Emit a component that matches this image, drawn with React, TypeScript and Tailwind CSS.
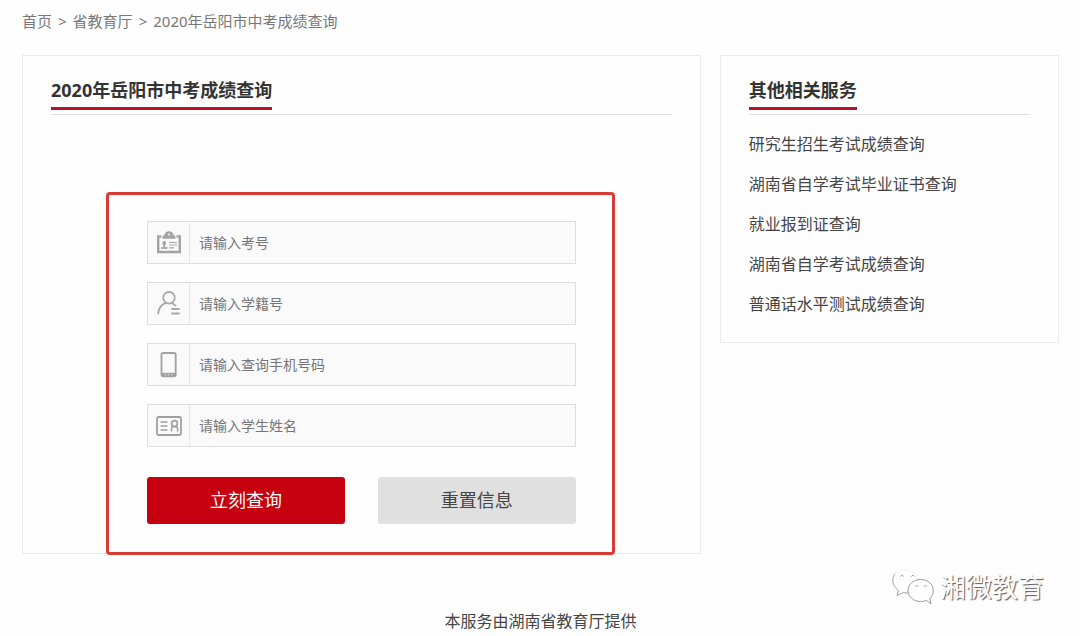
import React from 'react';

interface Field {
  id: string;
  placeholder: string;
  type: string;
  icon: React.ReactNode;
}

interface PanelTitleProps {
  children: React.ReactNode;
}

const BadgeIcon: React.FC = () => (
  <svg width="26" height="24" viewBox="0 0 26 24" fill="none" stroke="#a3a3a3" aria-hidden="true">
    <path d="M5.5 5.5H2.2V21H23.8V5.5H20.5" strokeWidth="2.4" />
    <path d="M6.5 7.8V6C6.5 4.8 7.4 4.2 8.4 4.2C8.8 1.8 10.6 0.2 13 0.2S17.2 1.8 17.6 4.2C18.6 4.2 19.5 4.8 19.5 6V7.8Z" fill="#a3a3a3" stroke="none" />
    <circle cx="13" cy="3.4" r="1" fill="#fcfcfc" stroke="none" />
    <circle cx="8.2" cy="12" r="1.9" fill="#a3a3a3" stroke="none" />
    <path d="M8.2 13V16.5" strokeWidth="1.8" />
    <path d="M5 17H11.5" strokeWidth="1.8" />
    <path d="M13 11.5H21M13 14H21M13 16.8H18" strokeWidth="1.2" />
  </svg>
);

const PersonIcon: React.FC = () => (
  <svg width="26" height="26" viewBox="0 0 26 26" fill="none" stroke="#a8a8a8" strokeWidth="1.8" strokeLinecap="round" aria-hidden="true">
    <circle cx="13" cy="6.8" r="5.8" />
    <path d="M9.8 11.8C5.4 13.4 2.5 17.2 2.2 22.5" />
    <path d="M16.2 12L19.5 14.6" />
    <path d="M16 18H23M16 22.5H23" />
  </svg>
);

const PhoneIcon: React.FC = () => (
  <svg width="18" height="26" viewBox="0 0 18 26" fill="none" stroke="#a0a0a0" aria-hidden="true">
    <rect x="1.5" y="1" width="14.2" height="23.4" rx="1.8" strokeWidth="1.8" />
    <path d="M1.6 22.6H15.6" strokeWidth="3.6" />
    <path d="M4.6 22.8H6.1M7.6 22.8H9.6M11.1 22.8H12.6" stroke="#e4e4e4" strokeWidth="1" />
  </svg>
);

const CardIcon: React.FC = () => (
  <svg width="26" height="20" viewBox="0 0 26 20" fill="none" stroke="#a0a0a0" aria-hidden="true">
    <rect x="1" y="1" width="24" height="18" rx="1.5" strokeWidth="1.8" />
    <path d="M4.5 6H11.5M4.5 10H11.5M4.5 14H11.5" strokeWidth="1.5" />
    <path d="M15.5 15.5V12.5C15.5 11.3 16.3 10.6 17.4 10.6H19.4C20.6 10.6 21.6 11.3 21.6 12.5V15.5" strokeWidth="1.6" />
    <circle cx="18.5" cy="7.6" r="2.9" strokeWidth="1.7" />
  </svg>
);

const WechatIcon: React.FC = () => (
  <svg width="44" height="38" viewBox="0 0 44 38" fill="none" aria-hidden="true">
    <g stroke="#9a9a9a" strokeWidth="0.9" strokeLinecap="round">
      <path d="M4 6C0.5 10.5 0.5 17.5 7.5 22.5L6 27.5L12.5 24.5C14 25 16 25.2 17.5 25" />
      <path d="M9.5 8.3C10 6.7 12 6.7 12.4 8.3M20.5 8.3C21 6.7 23 6.7 23.4 8.3" />
    </g>
    <path d="M4 6C9 0.5 21 0.5 26.5 8" stroke="#ececec" strokeWidth="0.8" />
    <path
      d="M29.5 11.5C22.5 11.5 17 16.3 17 22.5C17 28.8 22.5 33.5 29.5 33.5C31.6 33.5 33.6 33.2 35.4 32.4L40 35.8L38.9 30.4C41.2 28.4 42.3 25.6 42.3 22.5C42.3 16.3 36.6 11.5 29.5 11.5Z"
      fill="#fefefe"
      stroke="#8f8f8f"
      strokeWidth="0.9"
    />
    <path d="M24.4 18.7C24.8 17.2 26.7 17.2 27 18.7M33.2 18.7C33.6 17.2 35.5 17.2 35.8 18.7" stroke="#8f8f8f" strokeWidth="0.9" />
  </svg>
);

const fields: Field[] = [
  { id: 'exam-no', placeholder: '请输入考号', type: 'text', icon: <BadgeIcon /> },
  { id: 'student-no', placeholder: '请输入学籍号', type: 'text', icon: <PersonIcon /> },
  { id: 'phone', placeholder: '请输入查询手机号码', type: 'tel', icon: <PhoneIcon /> },
  { id: 'student-name', placeholder: '请输入学生姓名', type: 'text', icon: <CardIcon /> },
];

const services = [
  '研究生招生考试成绩查询',
  '湖南省自学考试毕业证书查询',
  '就业报到证查询',
  '湖南省自学考试成绩查询',
  '普通话水平测试成绩查询',
];

const PanelTitle: React.FC<PanelTitleProps> = ({ children }) => (
  <div className="flex border-b border-[#dedede] pb-1">
    <h2 className="border-b-3 border-[#b5122b] pb-[3px] text-lg leading-7 font-bold text-[#333]">{children}</h2>
  </div>
);

const App: React.FC = () => {
  return (
    <div className="relative min-h-screen bg-[#fefefe] pr-[21px] pl-[22px] font-['Noto_Sans','Noto_Sans_CJK_SC',sans-serif] text-[#444]">
      <nav className="flex h-[55px] gap-[6px] pt-[10px] text-[15px] leading-[22px] text-[#777]">
        <a href="#">首页</a>
        <span>&gt;</span>
        <a href="#">省教育厅</a>
        <span>&gt;</span>
        <span>2020年岳阳市中考成绩查询</span>
      </nav>

      <main className="grid grid-cols-[2fr_1fr] items-start gap-[19px]">
        <section className="border border-[#ebebeb] px-7 pt-5">
          <PanelTitle>2020年岳阳市中考成绩查询</PanelTitle>

          {/* The highlighted frame reaches just past the bottom edge of the panel */}
          <form className="mt-[77px] mr-[57px] -mb-[2px] ml-[55px] rounded-[4px] border-3 border-[#d93a35] pt-[26px] pr-[36px] pb-7 pl-[38px]">
            <div className="flex flex-col gap-[18px]">
              {fields.map((field) => (
                <div key={field.id} className="flex h-[43px] items-stretch border border-[#dedede] bg-[#fbfafb]">
                  <label
                    htmlFor={field.id}
                    aria-label={field.placeholder}
                    className="flex w-[42px] shrink-0 items-center justify-center border-r border-[#e6e6e6]"
                  >
                    {field.icon}
                  </label>
                  <input
                    id={field.id}
                    type={field.type}
                    placeholder={field.placeholder}
                    className="min-w-0 flex-1 px-[9px] text-sm text-[#444] outline-none placeholder:text-[#757575]"
                  />
                </div>
              ))}
            </div>
            <div className="mt-[30px] grid grid-cols-2 gap-[33px] text-lg">
              <button type="submit" className="h-[47px] rounded-[3px] bg-[#c7000f] pb-[2px] text-white">
                立刻查询
              </button>
              <button type="reset" className="h-[47px] rounded-[3px] bg-[#e0e0e1] pb-[2px] text-[#444]">
                重置信息
              </button>
            </div>
          </form>
        </section>

        <aside className="border border-[#ebebeb] px-7 pt-5 pb-[17px]">
          <PanelTitle>其他相关服务</PanelTitle>
          <ul className="mt-[10px]">
            {services.map((service) => (
              <li key={service} className="h-10 leading-[39px]">
                <a href="#">{service}</a>
              </li>
            ))}
          </ul>
        </aside>
      </main>

      <footer className="pt-[55px] text-center leading-6">本服务由湖南省教育厅提供</footer>

      {/* Account watermark over the page corner */}
      <div className="absolute right-[36px] bottom-[30px] flex items-center gap-[5px]">
        <WechatIcon />
        <span className="text-[26px] leading-9 text-white [text-shadow:1px_1px_1px_#555]">湘微教育</span>
      </div>
    </div>
  );
};

export default App;
